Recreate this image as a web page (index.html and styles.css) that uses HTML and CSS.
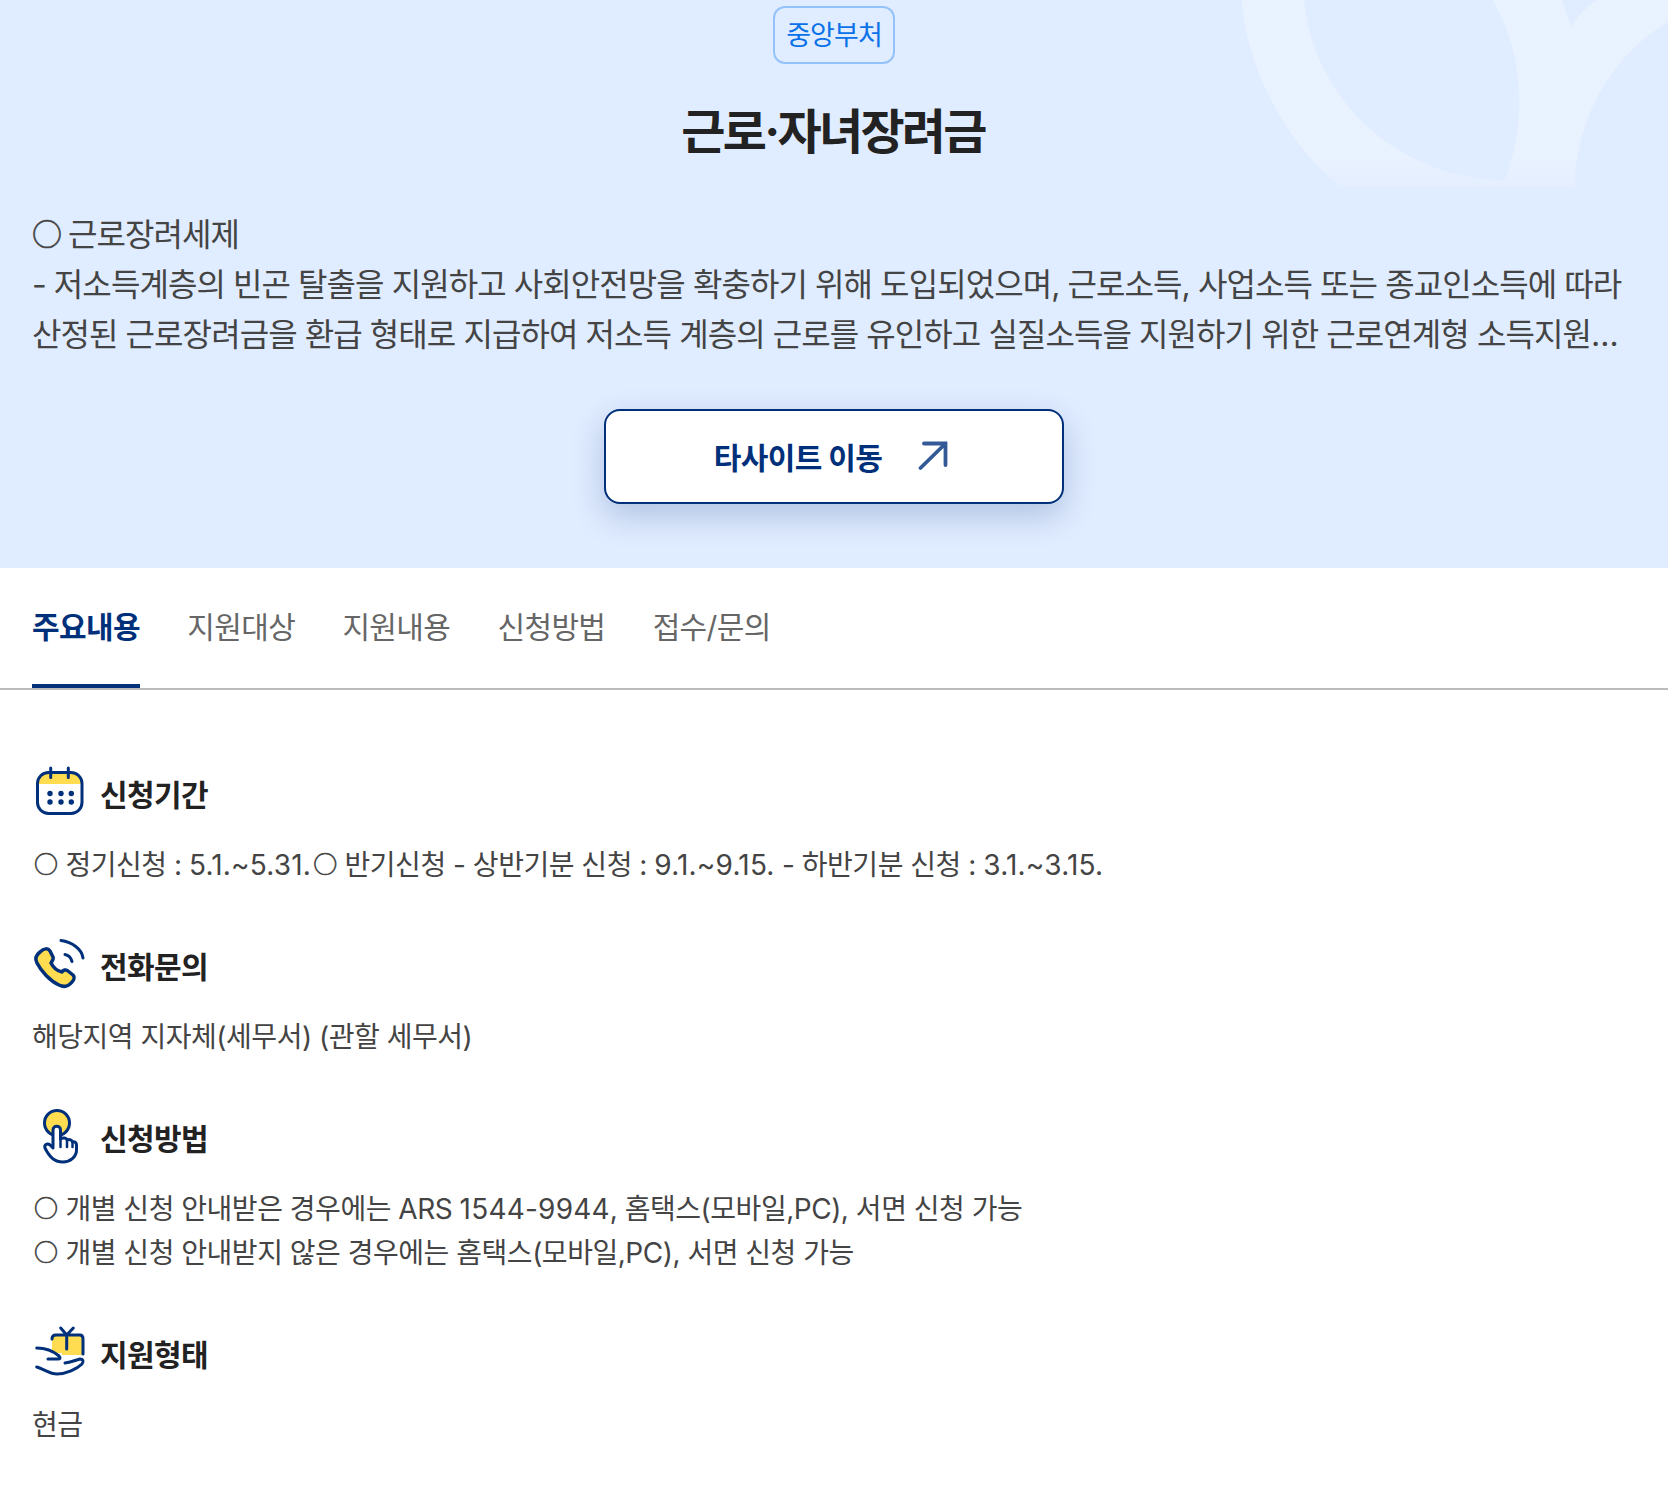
FILE: index.html
```html
<!DOCTYPE html>
<html lang="ko">
<head>
<meta charset="utf-8">
<title>근로·자녀장려금</title>
<link rel="stylesheet" href="styles.css">
</head>
<body>
<header class="hero">
  <svg class="hero-deco" viewBox="0 0 1404 660" aria-hidden="true">
    <defs>
      <linearGradient id="fade" gradientUnits="userSpaceOnUse" x1="0" y1="470" x2="0" y2="620">
        <stop offset="0" stop-color="#fff" stop-opacity=".3"/>
        <stop offset="1" stop-color="#fff" stop-opacity="0"/>
      </linearGradient>
    </defs>
    <path fill="url(#fade)" d="M125 0C140 200 250 420 420 560L1125 560C1125 400 1200 190 1404 65L1404 0L1190 0Q1140 35 1113 80Q1100 35 1085 0L878 0C960 140 990 340 915 540C600 540 340 300 312 0Z"/>
  </svg>
  <span class="badge">중앙부처</span>
  <h1 class="hero-title">근로·자녀장려금</h1>
  <p class="hero-text"><span class="mark">○</span> 근로장려세제<br>- 저소득계층의 빈곤 탈출을 지원하고 사회안전망을 확충하기 위해 도입되었으며, 근로소득, 사업소득 또는 종교인소득에 따라 산정된 근로장려금을 환급 형태로 지급하여 저소득 계층의 근로를 유인하고 실질소득을 지원하기 위한 근로연계형 소득지원세제입니다. 소득과 부양가족 요건을 충족한 가구에 지급합니다.</p>
  <a class="site-btn" href="#">
    <span>타사이트 이동</span>
    <svg class="site-arrow" viewBox="0 0 30 30" aria-hidden="true"><path d="M2.500 27L27.500 2.500M6 2.500H27.500V24" fill="none" stroke="#335a97" stroke-width="3.800" stroke-linecap="round" stroke-linejoin="miter"/></svg>
  </a>
</header>
<nav class="tabs">
  <a class="tab tab-active" href="#">주요내용</a>
  <a class="tab" href="#">지원대상</a>
  <a class="tab" href="#">지원내용</a>
  <a class="tab" href="#">신청방법</a>
  <a class="tab" href="#">접수/문의</a>
</nav>
<main class="content">
  <section class="item">
    <h2 class="item-head">
      <svg class="item-icon" viewBox="0 0 56 56" aria-hidden="true">
        <path d="M5.500 17V16C5.500 10 9.500 5.500 16 5.500H40C46 5.500 50 10 50 16V17Z" fill="#ffdc50"/>
        <rect x="5.500" y="5.500" width="44.500" height="41" rx="11" fill="none" stroke="#00307a" stroke-width="3"/>
        <path d="M18.700 1V10.500M36.300 1V10.500" fill="none" stroke="#00307a" stroke-width="3" stroke-linecap="round"/>
        <g fill="#00307a"><circle cx="18" cy="26.500" r="2.700"/><circle cx="29" cy="26.500" r="2.700"/><circle cx="39.300" cy="26.500" r="2.700"/><circle cx="18" cy="35" r="2.700"/><circle cx="29" cy="35" r="2.700"/><circle cx="39.300" cy="35" r="2.700"/></g>
      </svg>
      신청기간
    </h2>
    <p class="item-text"><span class="mark">○</span> 정기신청 : <span class="num">5.1.~5.31.</span><span class="mark">○</span> 반기신청 - 상반기분 신청 : <span class="num">9.1.~9.15.</span> - 하반기분 신청 : <span class="num">3.1.~3.15.</span></p>
  </section>
  <section class="item">
    <h2 class="item-head">
      <svg class="item-icon" viewBox="0 0 56 56" aria-hidden="true">
        <path d="M8 13C12 9 16 9 18 12L21 18C22 20 20 22 19 24C21 28 25 32 30 33C31 31 34 30 36 32L41 36C43 38 42 41 40 43C36 48 31 48 27 46C18 42 9 32 5 24C3 20 4 16 8 13Z" fill="#ffdc50" stroke="#00307a" stroke-width="3.500" stroke-linejoin="round"/>
        <path d="M29 1.500C40 3 50 10 51 19M33 15.500C36 16 39 19 40 22.500" fill="none" stroke="#00307a" stroke-width="3" stroke-linecap="round"/>
      </svg>
      전화문의
    </h2>
    <p class="item-text">해당지역 지자체(세무서) (관할 세무서)</p>
  </section>
  <section class="item">
    <h2 class="item-head">
      <svg class="item-icon" viewBox="0 0 56 56" aria-hidden="true">
        <circle cx="25" cy="12" r="12.500" fill="#ffdc50" stroke="#00307a" stroke-width="3"/>
        <path d="M13 37C12 34 15 31.500 18 34L21 37V19C21 14 28.500 14 28.500 19V28C31 26 34.500 27 35 29C37.500 28 40 29 40.500 31C42.500 30 44.500 31.500 44.500 34V39C44.500 46 38 51 31 51C23 51 18 47 13 37Z" fill="#fff" stroke="#00307a" stroke-width="3" stroke-linejoin="round"/>
        <path d="M28.500 28V36M35 29V36M40.500 31V36" fill="none" stroke="#00307a" stroke-width="2.500" stroke-linecap="round"/>
      </svg>
      신청방법
    </h2>
    <div class="item-text">
      <p class="item-line"><span class="mark">○</span> 개별 신청 안내받은 경우에는 ARS <span class="num">1544-9944</span>, 홈택스(모바일,PC), 서면 신청 가능</p>
      <p class="item-line"><span class="mark">○</span> 개별 신청 안내받지 않은 경우에는 홈택스(모바일,PC), 서면 신청 가능</p>
    </div>
  </section>
  <section class="item">
    <h2 class="item-head">
      <svg class="item-icon" viewBox="0 0 56 56" aria-hidden="true">
        <path d="M20 8H51V28H30V26H20Z" fill="#ffdc50"/>
        <path d="M20 12C20 9.500 21 8 24 8H48C50 8 51 10 51 12V27M34.700 8V22M34.700 8L28.700 1M34.700 8L41.300 1" fill="none" stroke="#00307a" stroke-width="3" stroke-linecap="round" stroke-linejoin="round"/>
        <path d="M4.700 21C12 21 20 23 27 29C29 31 28 32 26 32H16M4.700 40C12 42 18 47 25 47C34 47 45 42 50 37C52 34 51 32 48 32C44 33 40 35 33 36" fill="none" stroke="#00307a" stroke-width="3" stroke-linecap="round" stroke-linejoin="round"/>
      </svg>
      지원형태
    </h2>
    <p class="item-text">현금</p>
  </section>
</main>
</body>
</html>
```

FILE: styles.css
```css
* { box-sizing: border-box; }
html, body { margin: 0; padding: 0; }
body {
  background: #fff;
  color: #222;
  font-family: Inter, "Noto Sans CJK KR", sans-serif;
  width: 1668px;
  height: 1492px;
  overflow: hidden;
}
.hero {
  position: relative;
  height: 568px;
  background: #e0ecff;
  padding: 6px 32px 0;
  display: flex;
  flex-direction: column;
  align-items: center;
  overflow: hidden;
}
.hero-deco {
  position: absolute;
  top: 0;
  right: 0;
  width: 468px;
  height: 220px;
}
.badge {
  position: relative;
  width: 122px;
  height: 58px;
  padding-bottom: 4px;
  display: flex;
  align-items: center;
  justify-content: center;
  border: 2px solid #94c3fa;
  border-radius: 12px;
  color: #0a72e8;
  font-size: 27px;
  letter-spacing: -0.95px;
}
.hero-title {
  position: relative;
  margin: 32px 0 0;
  padding-right: 2px;
  font-size: 48px;
  line-height: 72px;
  font-weight: 700;
  color: #222;
  letter-spacing: -2.7px;
}
.hero-text {
  position: relative;
  margin: 42px 0 0;
  width: 100%;
  font-size: 32px;
  line-height: 50px;
  color: #444;
  letter-spacing: -0.93px;
  display: -webkit-box;
  -webkit-box-orient: vertical;
  -webkit-line-clamp: 3;
  overflow: hidden;
}
.mark {
  font-family: "Noto Sans CJK KR", sans-serif;
  font-size: 24px;
  line-height: 0;
  margin-left: 2px;
  letter-spacing: 0;
  vertical-align: 2px;
  -webkit-text-stroke: 0.6px #444;
}
.hero-text .mark {
  font-size: 30px;
  margin-left: 0;
  letter-spacing: -2px;
  vertical-align: 1px;
}
.num { letter-spacing: 0.2px; }
.site-btn {
  position: relative;
  margin-top: 49px;
  width: 460px;
  height: 95px;
  padding: 0 6px 2px 0;
  display: flex;
  align-items: center;
  justify-content: center;
  gap: 36px;
  background: #fff;
  border: 2px solid #00307a;
  border-radius: 16px;
  box-shadow: 0 12px 32px rgba(0, 48, 122, .22);
  color: #00307a;
  font-size: 30px;
  font-weight: 700;
  letter-spacing: -0.6px;
  text-decoration: none;
}
.site-arrow { width: 30px; height: 30px; }
.tabs {
  height: 122px;
  padding: 0 32px;
  display: flex;
  gap: 47.3px;
  border-bottom: 2px solid #bbb;
}
.tab {
  height: 120px;
  padding-top: 39px;
  font-size: 30px;
  line-height: 40px;
  color: #666;
  letter-spacing: -0.65px;
  text-decoration: none;
  border-bottom: 4px solid transparent;
}
.tab-active {
  color: #00307a;
  font-weight: 700;
  letter-spacing: -0.6px;
  border-bottom-color: #00307a;
}
.content { padding: 75px 32px 0; }
.item { margin-bottom: 50px; }
.item-head {
  margin: 0;
  height: 56px;
  display: flex;
  align-items: center;
  gap: 12px;
  font-size: 30px;
  font-weight: 700;
  color: #222;
  letter-spacing: -0.6px;
}
.item-icon { width: 56px; height: 56px; flex: none; overflow: visible; margin-top: 3px; }
.item-text {
  margin: 22px 0 0;
  font-size: 28px;
  line-height: 44px;
  color: #444;
  letter-spacing: -0.48px;
}
.item-line { margin: 0; }
```
